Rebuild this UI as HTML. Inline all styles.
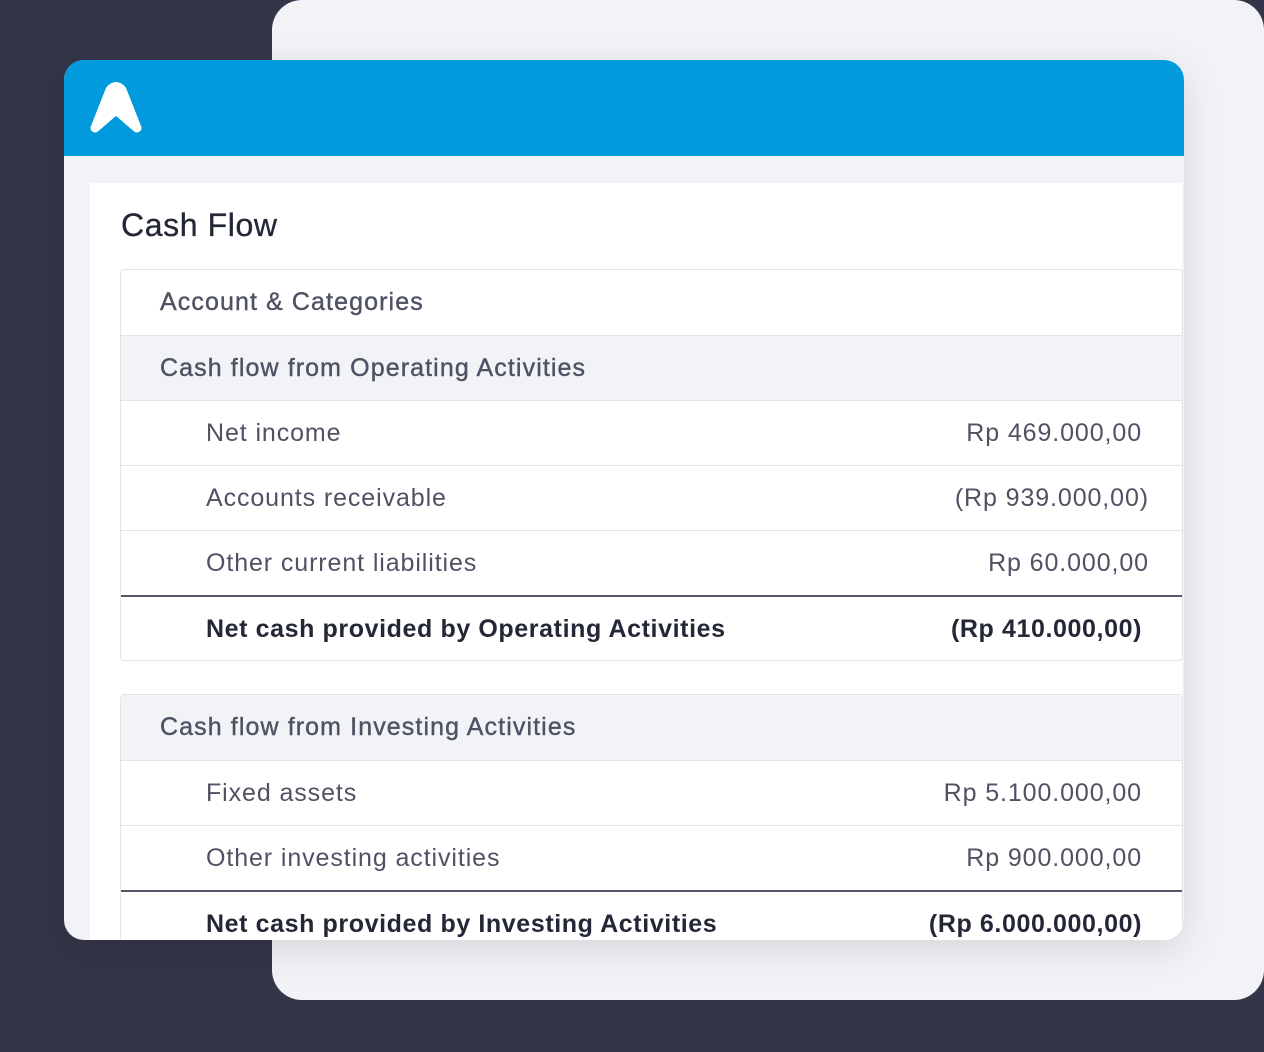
<!DOCTYPE html>
<html><head><meta charset="utf-8"><style>
*{margin:0;padding:0;box-sizing:border-box}
body{width:1264px;height:1052px;background:#353549;position:relative;overflow:hidden;font-family:"Liberation Sans",sans-serif}
.back{position:absolute;left:272px;top:0;width:992px;height:1000px;background:#f2f3f7;border-radius:30px}
.card{position:absolute;left:64px;top:60px;width:1120px;height:880px;background:#f2f3f7;border-radius:20px;overflow:hidden;box-shadow:0 10px 40px rgba(0,0,0,.12)}
.hdr{position:absolute;left:0;top:0;width:100%;height:96px;background:#019bdd}
.panel{position:absolute;left:26px;top:123px;width:1092px;height:800px;background:#fff}
.title{position:absolute;left:31px;top:24px;font-size:32px;letter-spacing:0.6px;color:#232736;-webkit-text-stroke:0.3px #232736}
.tbl{position:absolute;left:30px;width:1063px;border:1px solid #e3e4e8;border-radius:4px;background:#fff}
.r{position:relative;height:65px;border-top:1px solid #e3e4e8;font-size:25px;letter-spacing:0.9px;color:#4f5263}
.r:first-child{border-top:none}
.r.g{background:#f2f3f7}
.r .l{position:absolute;left:85px;top:18px}
.r.g .l,.r.h .l{left:39px;letter-spacing:1.1px;-webkit-text-stroke:0.4px #4f5263}
.r .v{position:absolute;right:40px;top:18px}
.r.b{border-top:2px solid #55586a;font-weight:bold;color:#232736;letter-spacing:0.6px}
.r .v.w{right:33px}
</style></head><body>
<div class="back"></div>
<div class="card">
<div class="hdr">
<svg width="60" height="60" style="position:absolute;left:22px;top:18px" viewBox="0 0 60 60">
<path d="M9 50 L24 12 Q30 5 36 12 L51 50 L30 32 Z" fill="#fff" stroke="#fff" stroke-width="9" stroke-linejoin="round"/>
</svg>
</div>
<div class="panel">
<div class="title">Cash Flow</div>
<div class="tbl" style="top:86px">
<div class="r h"><span class="l">Account &amp; Categories</span></div>
<div class="r g"><span class="l">Cash flow from Operating Activities</span></div>
<div class="r"><span class="l">Net income</span><span class="v">Rp 469.000,00</span></div>
<div class="r"><span class="l">Accounts receivable</span><span class="v w">(Rp 939.000,00)</span></div>
<div class="r"><span class="l">Other current liabilities</span><span class="v w">Rp 60.000,00</span></div>
<div class="r b"><span class="l">Net cash provided by Operating Activities</span><span class="v">(Rp 410.000,00)</span></div>
</div>
<div class="tbl" style="top:511px">
<div class="r g"><span class="l">Cash flow from Investing Activities</span></div>
<div class="r"><span class="l">Fixed assets</span><span class="v">Rp 5.100.000,00</span></div>
<div class="r"><span class="l">Other investing activities</span><span class="v">Rp 900.000,00</span></div>
<div class="r b"><span class="l">Net cash provided by Investing Activities</span><span class="v">(Rp 6.000.000,00)</span></div>
</div>
</div>
</div>
</body></html>
